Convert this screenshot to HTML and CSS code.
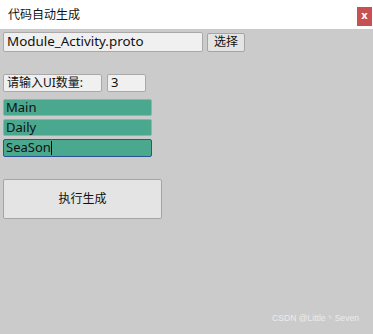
FILE: index.html
```html
<!DOCTYPE html>
<html>
<head>
<meta charset="utf-8">
<link rel="stylesheet" href="styles.css">
</head>
<body>
<div class="window">
  <div class="titlebar">
    <span class="title">代码自动生成</span>
    <span class="close">x</span>
  </div>
  <div class="content">
    <div class="row row1">
      <div class="field file">Module_Activity.proto</div>
      <div class="btn small">选择</div>
    </div>
    <div class="row row2">
      <div class="field label">请输入UI数量:</div>
      <div class="field count">3</div>
    </div>
    <div class="list">
      <div class="green">Main</div>
      <div class="green">Daily</div>
      <div class="green focus">SeaSon<span class="caret"></span></div>
    </div>
    <div class="btn big">执行生成</div>
  </div>
  <div class="watermark">CSDN @Little丶Seven</div>
</div>
</body>
</html>
```
FILE: styles.css
```css
html, body {
  margin: 0;
  padding: 0;
}
body {
  background: #cbcbcb;
  font-family: "Noto Sans", "Noto Sans CJK SC", sans-serif;
  color: #111;
}
.window {
  position: relative;
  width: 373px;
  height: 334px;
  overflow: hidden;
}
.titlebar {
  height: 29px;
  background: #fff;
  display: flex;
  justify-content: space-between;
  align-items: flex-start;
}
.title {
  font-size: 12px;
  margin: 6px 0 0 8px;
  line-height: 18px;
}
.close {
  margin-top: 7px;
  margin-right: 1px;
  width: 15px;
  height: 19px;
  background: #c75050;
  color: #fff;
  font-size: 10px;
  font-weight: bold;
  line-height: 18px;
  text-align: center;
  font-family: "DejaVu Sans", sans-serif;
}
.content {
  padding: 3px 0 0 3px;
}
.row {
  display: flex;
  align-items: flex-start;
}
.field {
  box-sizing: border-box;
  background: #f0f0f0;
  border: 1px solid #a9a9a9;
  border-radius: 2px;
  font-size: 13px;
  padding-left: 3px;
}
.file {
  width: 200px;
  height: 20px;
  line-height: 16px;
  font-size: 13.4px;
}
.btn {
  box-sizing: border-box;
  background: #e4e4e4;
  border: 1px solid #a5a5a5;
  border-radius: 2px;
  text-align: center;
  font-size: 12px;
}
.small {
  margin: 1px 0 0 4px;
  width: 38px;
  height: 19px;
  line-height: 16px;
}
.row2 {
  margin-top: 22px;
}
.label {
  width: 99px;
  height: 18px;
  line-height: 15px;
  padding-left: 3px;
  font-size: 12px;
}
.count {
  margin-left: 5px;
  width: 39px;
  height: 18px;
  line-height: 15px;
  padding-left: 3px;
}
.list {
  margin-top: 7px;
  display: flex;
  flex-direction: column;
  gap: 3px;
}
.green {
  box-sizing: border-box;
  width: 149px;
  height: 17px;
  background: #4aa88f;
  border: 1px solid #8fb3a8;
  border-radius: 2px;
  font-size: 13px;
  line-height: 14px;
  padding-left: 2px;
  color: #111;
}
.green.focus {
  height: 18px;
  border-color: #2a5590;
  line-height: 15px;
}
.caret {
  display: inline-block;
  width: 1px;
  height: 14px;
  background: #000;
  vertical-align: -3px;
}
.big {
  margin-top: 22px;
  width: 159px;
  height: 40px;
  line-height: 38px;
}
.watermark {
  position: absolute;
  right: 14px;
  bottom: 9px;
  font-size: 8.6px;
  color: #ececec;
  font-family: "Liberation Sans", sans-serif;
}
```
